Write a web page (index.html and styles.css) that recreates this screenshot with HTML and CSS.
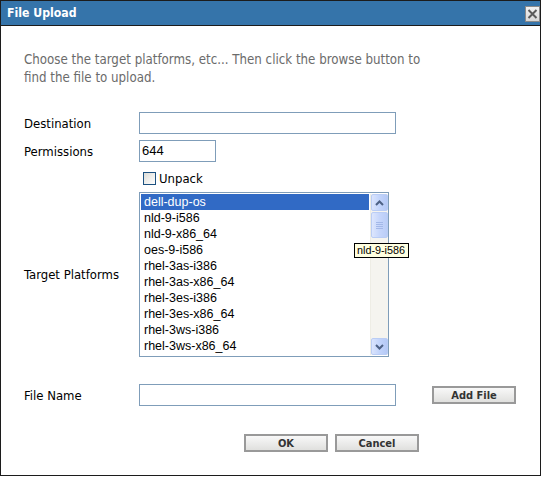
FILE: index.html
```html
<!DOCTYPE html>
<html>
<head>
<meta charset="utf-8">
<link rel="stylesheet" href="styles.css">
</head>
<body>
<div class="dialog">
  <div class="titlebar">
    <span class="title">File Upload</span>
    <span class="close">
      <svg width="13" height="14" viewBox="0 0 13 14"><path d="M2.5 3 L10.5 11 M10.5 3 L2.5 11" stroke="#5a5a5a" stroke-width="2" fill="none"/></svg>
    </span>
  </div>
  <div class="content">
    <p class="intro">Choose the target platforms, etc... Then click the browse button to<br>find the file to upload.</p>
    <div class="row r-dest">
      <span class="label">Destination</span>
      <span class="input wide"></span>
    </div>
    <div class="row r-perm">
      <span class="label">Permissions</span>
      <span class="input narrow">644</span>
    </div>
    <div class="row r-unpack">
      <span class="label"></span>
      <span class="checkbox"></span><span class="cblabel">Unpack</span>
    </div>
    <div class="row r-list">
      <span class="label">Target Platforms</span>
      <div class="listbox">
        <div class="items">
          <div class="item sel">dell-dup-os</div>
          <div class="item">nld-9-i586</div>
          <div class="item">nld-9-x86_64</div>
          <div class="item">oes-9-i586</div>
          <div class="item">rhel-3as-i386</div>
          <div class="item">rhel-3as-x86_64</div>
          <div class="item">rhel-3es-i386</div>
          <div class="item">rhel-3es-x86_64</div>
          <div class="item">rhel-3ws-i386</div>
          <div class="item">rhel-3ws-x86_64</div>
        </div>
        <div class="scrollbar">
          <div class="sbtn">
            <svg width="9" height="6" viewBox="0 0 9 6"><path d="M1 5 L4.5 1.5 L8 5" stroke="#4d6185" stroke-width="2" fill="none"/></svg>
          </div>
          <div class="thumb">
            <svg width="7" height="8" viewBox="0 0 7 8"><path d="M0 1.5h7M0 3.5h7M0 5.5h7M0 7.5h7" stroke="#a3b8e8" stroke-width="1"/></svg>
          </div>
          <div class="track"></div>
          <div class="sbtn">
            <svg width="9" height="6" viewBox="0 0 9 6"><path d="M1 1 L4.5 4.5 L8 1" stroke="#4d6185" stroke-width="2" fill="none"/></svg>
          </div>
        </div>
        <div class="tooltip">nld-9-i586</div>
      </div>
    </div>
    <div class="row r-file">
      <span class="label">File Name</span>
      <span class="input wide"></span>
      <span class="btn addfile">Add File</span>
    </div>
    <div class="row r-btns">
      <span class="btn">OK</span>
      <span class="btn">Cancel</span>
    </div>
  </div>
</div>
</body>
</html>
```
FILE: styles.css
```css
html, body {
  margin: 0;
  padding: 0;
  background: #ffffff;
}
.dialog {
  box-sizing: border-box;
  width: 541px;
  height: 476px;
  border: 1px solid #1c1c1c;
  background: #fff;
  font-family: "DejaVu Sans Condensed", "DejaVu Sans", sans-serif;
  font-stretch: condensed;
  font-size: 13px;
  color: #000;
}
.titlebar {
  height: 24px;
  background: #3574aa;
  border-bottom: 1px solid #1c1c1c;
  display: flex;
  align-items: center;
  justify-content: space-between;
  padding-left: 6px;
}
.title {
  color: #fff;
  font-weight: bold;
  font-size: 12.2px;
}
.close {
  box-sizing: border-box;
  width: 15px;
  height: 16px;
  margin-top: 1px;
  background: linear-gradient(#f2f2f2, #d8d8d8);
  border: 1px solid #8a8a8a;
  display: flex;
  align-items: center;
  justify-content: center;
}
.content {
  padding-left: 23px;
}
.intro {
  margin: 25px 0 0 0;
  line-height: 18px;
  color: #6b6b6b;
  font-size: 13.2px;
}
.row {
  display: flex;
  align-items: center;
}
.label {
  width: 115px;
  flex: none;
}
.r-dest { margin-top: 25px; height: 22px; }
.r-perm { margin-top: 6px; height: 22px; }
.r-unpack { margin-top: 10px; height: 13px; }
.r-list { margin-top: 7px; }
.r-file { margin-top: 27px; height: 22px; }
.r-btns { margin-top: 28px; padding-left: 220px; gap: 7px; }
.input {
  box-sizing: border-box;
  height: 22px;
  border: 1px solid #7f9db9;
  background: #fff;
  font-family: "Liberation Sans", Arial, sans-serif;
  font-size: 13px;
  line-height: 20px;
  padding-left: 2px;
}
.wide { width: 257px; }
.narrow { width: 77px; }
.checkbox {
  box-sizing: border-box;
  width: 13px;
  height: 13px;
  margin-left: 4px;
  border: 1px solid #1c5180;
  background: linear-gradient(135deg, #dcdcd7, #ffffff);
}
.cblabel {
  margin-left: 3px;
}
.listbox {
  position: relative;
  box-sizing: border-box;
  width: 250px;
  height: 165px;
  border: 1px solid #7f9db9;
  background: #fff;
  display: flex;
  padding: 1px 0 1px 1px;
}
.items {
  flex: 1;
  font-family: "Liberation Sans", Arial, sans-serif;
  font-size: 12.5px;
  padding-right: 1px;
}
.item {
  height: 16px;
  line-height: 16px;
  padding-left: 3px;
  white-space: nowrap;
}
.item.sel {
  background: #316ac5;
  color: #fff;
}
.scrollbar {
  width: 17px;
  display: flex;
  flex-direction: column;
  background: #f5f4ef;
  border-left: 1px solid #eeede5;
}
.sbtn {
  box-sizing: border-box;
  height: 17px;
  border: 1px solid #bacdf5;
  border-radius: 2px;
  background: linear-gradient(90deg, #dae4fd, #c2d4fb 50%, #b5c9f6);
  display: flex;
  align-items: center;
  justify-content: center;
}
.thumb {
  box-sizing: border-box;
  height: 26px;
  margin-top: 1px;
  border: 1px solid #bacdf5;
  border-radius: 2px;
  background: linear-gradient(90deg, #dde6fd, #c6d6fb 50%, #bacdf7);
  display: flex;
  align-items: center;
  justify-content: center;
}
.track {
  flex: 1;
}
.tooltip {
  position: absolute;
  left: 214px;
  top: 50px;
  box-sizing: border-box;
  height: 15px;
  padding: 0 3px 0 2px;
  background: #ffffe1;
  border: 1px solid #000;
  font-family: "Liberation Sans", Arial, sans-serif;
  font-size: 10.8px;
  line-height: 13px;
  white-space: nowrap;
}
.btn {
  box-sizing: border-box;
  width: 84px;
  height: 18px;
  border: 2px solid #999999;
  background: linear-gradient(#f8f8f8, #e0e0de);
  font-weight: bold;
  font-size: 11px;
  color: #333;
  display: flex;
  align-items: center;
  justify-content: center;
}
.addfile {
  margin-left: 36px;
}
```
